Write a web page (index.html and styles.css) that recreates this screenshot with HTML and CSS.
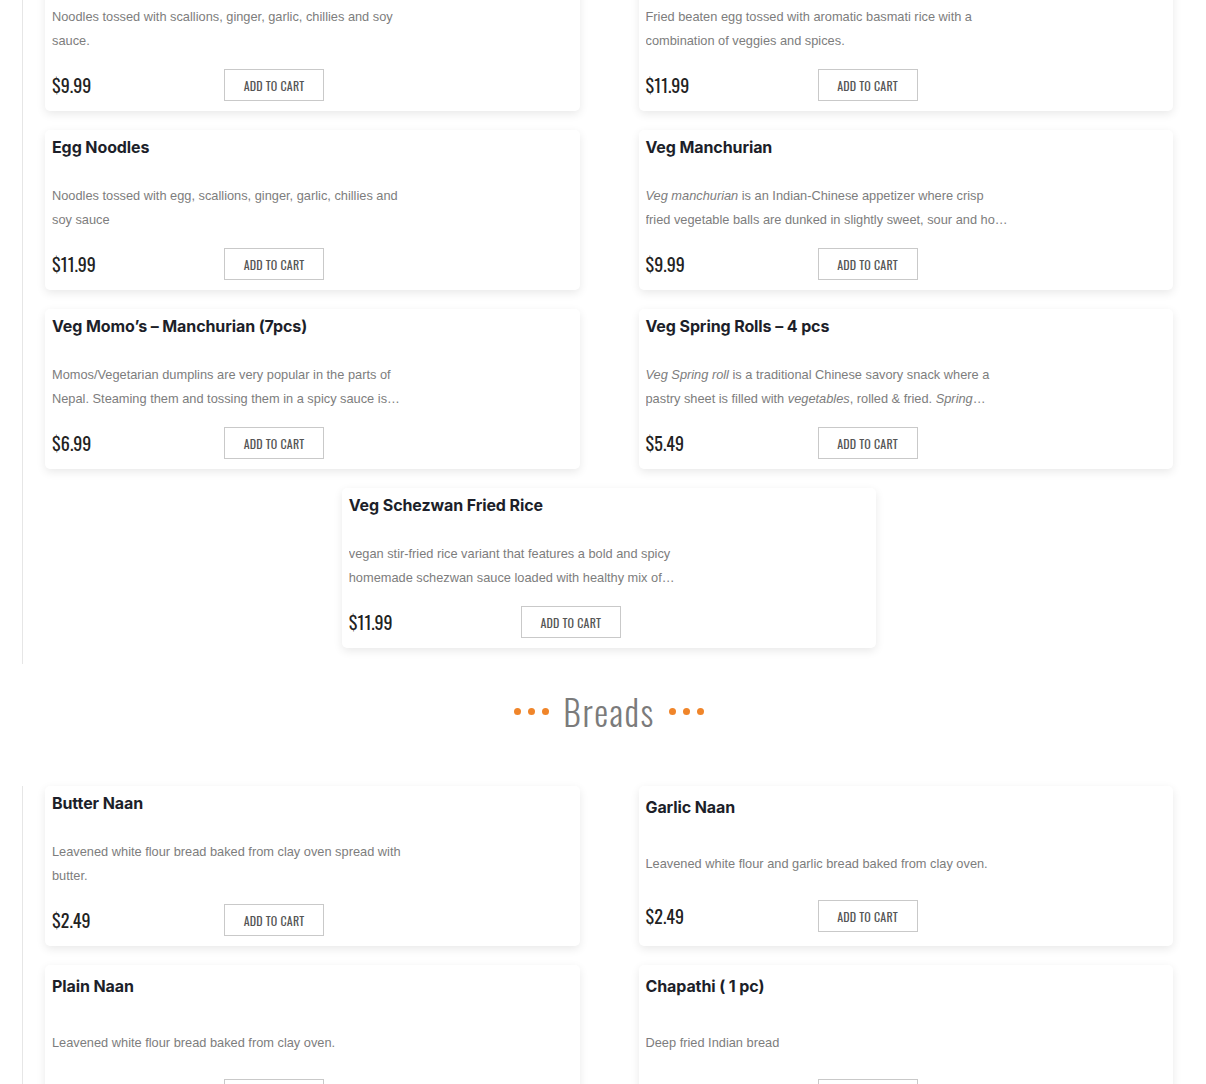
FILE: index.html
```html
<!DOCTYPE html>
<html lang="en">
<head>
<meta charset="utf-8">
<title>Menu</title>
<link rel="stylesheet" href="styles.css">
</head>
<body>
<div class="page">
  <section class="menu-section first">
    <div class="grid">
      <article class="card">
        <h3 class="title">Veg Hakka Noodles</h3>
        <p class="desc">Noodles tossed with scallions, ginger, garlic, chillies and soy sauce.</p>
        <div class="bottom"><span class="price">$9.99</span><button class="cart">Add to cart</button></div>
      </article>
      <article class="card">
        <h3 class="title">Egg Fried Rice</h3>
        <p class="desc">Fried beaten egg tossed with aromatic basmati rice with a combination of veggies and spices.</p>
        <div class="bottom"><span class="price">$11.99</span><button class="cart">Add to cart</button></div>
      </article>
      <article class="card">
        <h3 class="title">Egg Noodles</h3>
        <p class="desc">Noodles tossed with egg, scallions, ginger, garlic, chillies and soy sauce</p>
        <div class="bottom"><span class="price">$11.99</span><button class="cart">Add to cart</button></div>
      </article>
      <article class="card">
        <h3 class="title">Veg Manchurian</h3>
        <p class="desc"><em>Veg manchurian</em> is an Indian-Chinese appetizer where crisp fried vegetable balls are dunked in slightly sweet, sour and hot sauce.</p>
        <div class="bottom"><span class="price">$9.99</span><button class="cart">Add to cart</button></div>
      </article>
      <article class="card">
        <h3 class="title">Veg Momo’s – Manchurian (7pcs)</h3>
        <p class="desc">Momos/Vegetarian dumplins are very popular in the parts of Nepal. Steaming them and tossing them in a spicy sauce is pure joy.</p>
        <div class="bottom"><span class="price">$6.99</span><button class="cart">Add to cart</button></div>
      </article>
      <article class="card">
        <h3 class="title">Veg Spring Rolls – 4 pcs</h3>
        <p class="desc"><em>Veg Spring roll</em> is a traditional Chinese savory snack where a pastry sheet is filled with <em>vegetables</em>, rolled &amp; fried. <em>Spring</em><br><em>rolls</em> are crisp.</p>
        <div class="bottom"><span class="price">$5.49</span><button class="cart">Add to cart</button></div>
      </article>
      <article class="card">
        <h3 class="title">Veg Schezwan Fried Rice</h3>
        <p class="desc">vegan stir-fried rice variant that features a bold and spicy homemade schezwan sauce loaded with healthy mix of vegetables.</p>
        <div class="bottom"><span class="price">$11.99</span><button class="cart">Add to cart</button></div>
      </article>
    </div>
  </section>

  <h2 class="section-title">
    <span class="dots"><i></i><i></i><i></i></span>
    <span class="label">Breads</span>
    <span class="dots"><i></i><i></i><i></i></span>
  </h2>

  <section class="menu-section">
    <div class="grid">
      <article class="card">
        <h3 class="title">Butter Naan</h3>
        <p class="desc">Leavened white flour bread baked from clay oven spread with butter.</p>
        <div class="bottom"><span class="price">$2.49</span><button class="cart">Add to cart</button></div>
      </article>
      <article class="card">
        <h3 class="title">Garlic Naan</h3>
        <p class="desc">Leavened white flour and garlic bread baked from clay oven.</p>
        <div class="bottom"><span class="price">$2.49</span><button class="cart">Add to cart</button></div>
      </article>
      <article class="card">
        <h3 class="title">Plain Naan</h3>
        <p class="desc">Leavened white flour bread baked from clay oven.</p>
        <div class="bottom"><span class="price">$1.99</span><button class="cart">Add to cart</button></div>
      </article>
      <article class="card">
        <h3 class="title">Chapathi ( 1 pc)</h3>
        <p class="desc">Deep fried Indian bread</p>
        <div class="bottom"><span class="price">$1.99</span><button class="cart">Add to cart</button></div>
      </article>
    </div>
  </section>
</div>
</body>
</html>
```

FILE: styles.css
```css
html, body {
  margin: 0;
  padding: 0;
  background: #fff;
}

body {
  font-family: "Liberation Sans", Arial, sans-serif;
  overflow: hidden;
}

.page {
  margin-top: -49px;
  margin-left: 22px;
  width: 1174px;
}

.menu-section {
  border-left: 1px solid #e6e6e6;
  padding: 0 22px;
}

.menu-section.first {
  padding-bottom: 16px;
}

.grid {
  width: 1128px;
  display: flex;
  flex-wrap: wrap;
  justify-content: center;
  column-gap: 59px;
  row-gap: 19px;
}

.card {
  width: 534.5px;
  height: 160px;
  box-sizing: border-box;
  padding: 0 7px;
  background: #fff;
  border-radius: 5px;
  box-shadow: 0 3px 10px rgba(0, 0, 0, 0.09);
  display: flex;
  flex-direction: column;
  justify-content: space-around;
}

.title {
  margin: 0 0 12px;
  font-family: "Inter", "Noto Sans", sans-serif;
  font-weight: 700;
  font-size: 16px;
  line-height: 18px;
  color: #1d1f2a;
  letter-spacing: -0.1px;
}

.desc {
  margin: 0;
  width: 364px;
  font-size: 12.8px;
  line-height: 24px;
  color: #7d7d7d;
  display: -webkit-box;
  -webkit-line-clamp: 2;
  -webkit-box-orient: vertical;
  overflow: hidden;
}

.desc em {
  font-style: italic;
}

.bottom {
  height: 32px;
  margin-bottom: 2px;
  display: flex;
  align-items: center;
}

.price {
  width: 172px;
  font-family: "Oswald", "Liberation Sans Narrow", "DejaVu Sans Condensed", sans-serif;
  font-size: 18px;
  color: #222;
}

.cart {
  width: 100px;
  height: 32px;
  box-sizing: border-box;
  border: 1px solid #c9c9c9;
  background: #fff;
  padding: 0;
  font-family: "Oswald", "Liberation Sans Narrow", "DejaVu Sans Condensed", sans-serif;
  font-size: 12px;
  letter-spacing: 0.2px;
  text-transform: uppercase;
  color: #555;
  cursor: pointer;
}

.section-title {
  margin: 0;
  height: 122px;
  box-sizing: border-box;
  padding-top: 28px;
  display: flex;
  justify-content: center;
  align-items: flex-start;
  gap: 14px;
  font-weight: 300;
}

.section-title .label {
  font-family: "Oswald", "Liberation Sans Narrow", "DejaVu Sans Condensed", sans-serif;
  font-weight: 300;
  font-size: 35px;
  line-height: 38px;
  letter-spacing: 1.5px;
  color: #7b7b7b;
}

.dots {
  display: flex;
  gap: 7px;
  height: 38px;
  align-items: center;
}

.dots i {
  width: 7px;
  height: 7px;
  border-radius: 50%;
  background: #f0852a;
}
```
